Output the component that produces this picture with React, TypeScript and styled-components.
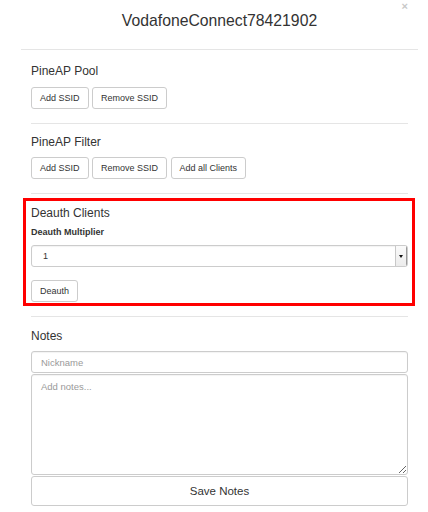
import React from "react";
import styled, { createGlobalStyle } from "styled-components";

const GlobalStyle = createGlobalStyle`
  html, body { margin: 0; padding: 0; background: #ffffff; }
  body { font-family: "Liberation Sans", Arial, Helvetica, sans-serif; color: #333333; }
  * { box-sizing: border-box; }
`;

const Modal = styled.div`
  margin-left: 21px;
  width: 397px;
`;

const Header = styled.div`
  position: relative;
  height: 50px;
  padding-top: 12px;
  border-bottom: 1px solid #e5e5e5;
  text-align: center;
`;

const Title = styled.h4`
  margin: 0;
  font-size: 15.75px;
  line-height: 18px;
  font-weight: 400;
  color: #333333;
`;

const Close = styled.button`
  position: absolute;
  top: 0px;
  right: 10px;
  padding: 0;
  border: none;
  background: none;
  font-family: "Liberation Sans", Arial, sans-serif;
  font-size: 11px;
  line-height: 12px;
  font-weight: 700;
  color: #c8c8c8;
  cursor: pointer;
`;

const Body = styled.div`
  padding: 0 10px;
`;

const Section = styled.section<{ $top: number; $bottom: number }>`
  padding-top: ${(p) => p.$top}px;
  padding-bottom: ${(p) => p.$bottom}px;
  border-bottom: 1px solid #e5e5e5;
`;

const LastSection = styled.section`
  padding-top: 11px;
  display: flex;
  flex-direction: column;
`;

const Highlight = styled.div`
  margin: 0 -7px 0 -8px;
  border: 3px solid #ff0000;
  padding: 4px 4px 1px 5px;
  display: flex;
  flex-direction: column;
  align-items: flex-start;
`;

const SectionTitle = styled.h5<{ $gap: number }>`
  margin: 0 0 ${(p) => p.$gap}px;
  font-size: 12px;
  line-height: 16px;
  font-weight: 400;
  color: #333333;
`;

const Label = styled.label`
  margin-top: 5px;
  font-size: 9px;
  line-height: 12px;
  font-weight: 700;
  color: #333333;
`;

const ButtonRow = styled.div`
  display: flex;
  gap: 3.5px;
`;

const SmallButton = styled.button<{ $mt?: number }>`
  height: 22px;
  margin-top: ${(p) => p.$mt ?? 0}px;
  padding: 0 8px;
  border: 1px solid #cccccc;
  border-radius: 3px;
  background: #ffffff;
  font-family: "Liberation Sans", Arial, sans-serif;
  font-size: 9px;
  line-height: 20px;
  color: #333333;
  cursor: pointer;
`;

const SelectBox = styled.div`
  margin-top: 7px;
  align-self: stretch;
  height: 22px;
  display: flex;
  border: 1px solid #cccccc;
  border-radius: 3px;
  background: #ffffff;
  overflow: hidden;
  box-shadow: inset 0 1px 1px rgba(0, 0, 0, 0.05);
`;

const Select = styled.select`
  flex: 1;
  appearance: none;
  -webkit-appearance: none;
  border: none;
  outline: none;
  background: transparent;
  padding: 0 0 0 11px;
  font-family: "Liberation Sans", Arial, sans-serif;
  font-size: 9px;
  color: #333333;
`;

const ArrowPart = styled.span`
  width: 12px;
  display: flex;
  align-items: center;
  justify-content: center;
  border-left: 1px solid #c8c8c8;
  border-right: 1px solid #9a9a9a;
  background: linear-gradient(#fafafa, #ececec);
`;

const Arrow = styled.span`
  width: 0;
  height: 0;
  border-left: 2px solid transparent;
  border-right: 2px solid transparent;
  border-top: 3px solid #111111;
`;

const TextInput = styled.input`
  height: 22px;
  padding: 0 9px;
  border: 1px solid #cccccc;
  border-radius: 3px;
  font-family: "Liberation Sans", Arial, sans-serif;
  font-size: 9.5px;
  color: #333333;
  box-shadow: inset 0 1px 1px rgba(0, 0, 0, 0.05);
  &::placeholder { color: #9a9a9a; }
`;

const TextArea = styled.textarea`
  margin-top: 1px;
  height: 101px;
  padding: 5px 9px;
  border: 1px solid #cccccc;
  border-radius: 3px;
  font-family: "Liberation Sans", Arial, sans-serif;
  font-size: 9.5px;
  line-height: 13px;
  color: #333333;
  box-shadow: inset 0 1px 1px rgba(0, 0, 0, 0.05);
  &::placeholder { color: #9a9a9a; }
`;

const WideButton = styled.button`
  margin-top: 1px;
  height: 30px;
  border: 1px solid #cccccc;
  border-radius: 3px;
  background: #ffffff;
  font-family: "Liberation Sans", Arial, sans-serif;
  font-size: 11.5px;
  color: #333333;
  cursor: pointer;
`;

export default function App() {
  return (
    <>
      <GlobalStyle />
      <Modal>
        <Header>
          <Close aria-label="Close">×</Close>
          <Title>VodafoneConnect78421902</Title>
        </Header>
        <Body>
          <Section $top={13} $bottom={14}>
            <SectionTitle $gap={8}>PineAP Pool</SectionTitle>
            <ButtonRow>
              <SmallButton>Add SSID</SmallButton>
              <SmallButton>Remove SSID</SmallButton>
            </ButtonRow>
          </Section>
          <Section $top={10} $bottom={14}>
            <SectionTitle $gap={7}>PineAP Filter</SectionTitle>
            <ButtonRow>
              <SmallButton>Add SSID</SmallButton>
              <SmallButton>Remove SSID</SmallButton>
              <SmallButton>Add all Clients</SmallButton>
            </ButtonRow>
          </Section>
          <Section $top={4} $bottom={10}>
            <Highlight>
              <SectionTitle $gap={0}>Deauth Clients</SectionTitle>
              <Label>Deauth Multiplier</Label>
              <SelectBox>
                <Select defaultValue="1">
                  {Array.from({ length: 10 }, (_, i) => (
                    <option key={i + 1} value={String(i + 1)}>
                      {i + 1}
                    </option>
                  ))}
                </Select>
                <ArrowPart>
                  <Arrow />
                </ArrowPart>
              </SelectBox>
              <SmallButton $mt={13}>Deauth</SmallButton>
            </Highlight>
          </Section>
          <LastSection>
            <SectionTitle $gap={7}>Notes</SectionTitle>
            <TextInput placeholder="Nickname" />
            <TextArea placeholder="Add notes..." />
            <WideButton>Save Notes</WideButton>
          </LastSection>
        </Body>
      </Modal>
    </>
  );
}
